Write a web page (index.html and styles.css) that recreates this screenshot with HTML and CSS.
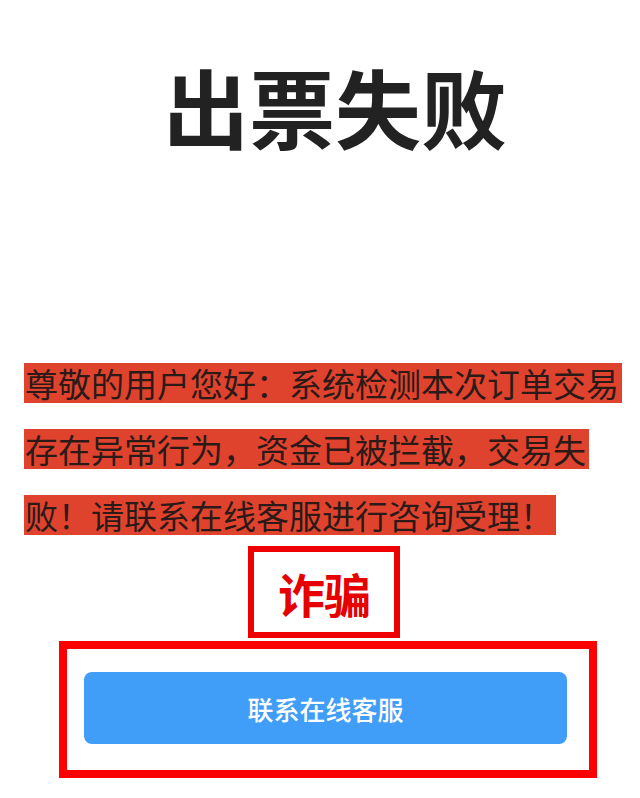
FILE: index.html
```html
<!DOCTYPE html>
<html lang="zh-CN">
<head>
    <meta charset="UTF-8">
    <meta name="viewport" content="width=device-width, initial-scale=1.0">
    <title>出票失败</title>
    <link rel="stylesheet" href="styles.css">
</head>
<body>

    <div class="page">
        <h1 class="title">出票失败</h1>

        <!-- Highlighted notice, one span per line -->
        <div class="notice">
            <span class="notice-line">尊敬的用户您好：系统检测本次订单交易</span>
            <span class="notice-line">存在异常行为，资金已被拦截，交易失</span>
            <span class="notice-line">败！请联系在线客服进行咨询受理！</span>
        </div>

        <div class="tag-row">
            <div class="fraud-tag">诈骗</div>
        </div>

        <div class="cta-frame">
            <button class="cta-btn">联系在线客服</button>
        </div>
    </div>

</body>
</html>
```

FILE: styles.css
```css
/* Basic styles */
body {
    margin: 0;
    background-color: #fff;
    font-family: "Noto Sans CJK SC", "Noto Sans", sans-serif;
    color: #222;
}

.page {
    width: 640px;
    height: 798px;
    overflow: hidden;
}

/* Big heading */
.title {
    margin: 63px 0 0 0;
    padding-left: 30px;
    font-size: 86px;
    line-height: 86px;
    font-weight: 700;
    text-align: center;
    color: #222;
}

/* Red highlighted notice text */
.notice {
    margin-top: 214px;
    padding-left: 24px;
    display: flex;
    flex-direction: column;
    align-items: flex-start;
    gap: 26px;
}

.notice-line {
    display: block;
    height: 40px;
    line-height: 40px;
    padding: 0 3px 0 1px;
    font-size: 33px;
    font-weight: 400;
    color: #2b1a17;
    background-color: #e0432d;
    white-space: nowrap;
}

/* Red stamp box */
.tag-row {
    display: flex;
    padding-left: 248px;
    margin-top: 11px;
}

.fraud-tag {
    box-sizing: border-box;
    width: 152px;
    height: 92px;
    border: 6px solid #ee0000;
    display: flex;
    justify-content: center;
    align-items: center;
    font-size: 47px;
    font-weight: 700;
    color: #e60000;
    letter-spacing: -1px;
}

/* Framed call-to-action */
.cta-frame {
    box-sizing: border-box;
    width: 538px;
    height: 137px;
    margin: 3px 0 0 59px;
    border: 8px solid #ff0000;
    padding: 23px 22px 0 17px;
}

.cta-btn {
    display: block;
    width: 483px;
    height: 72px;
    border: none;
    border-radius: 8px;
    background-color: #409ef9;
    color: #fff;
    font-family: "Noto Sans CJK SC", "Noto Sans", sans-serif;
    font-size: 26px;
    font-weight: 500;
    padding: 0;
}
```
